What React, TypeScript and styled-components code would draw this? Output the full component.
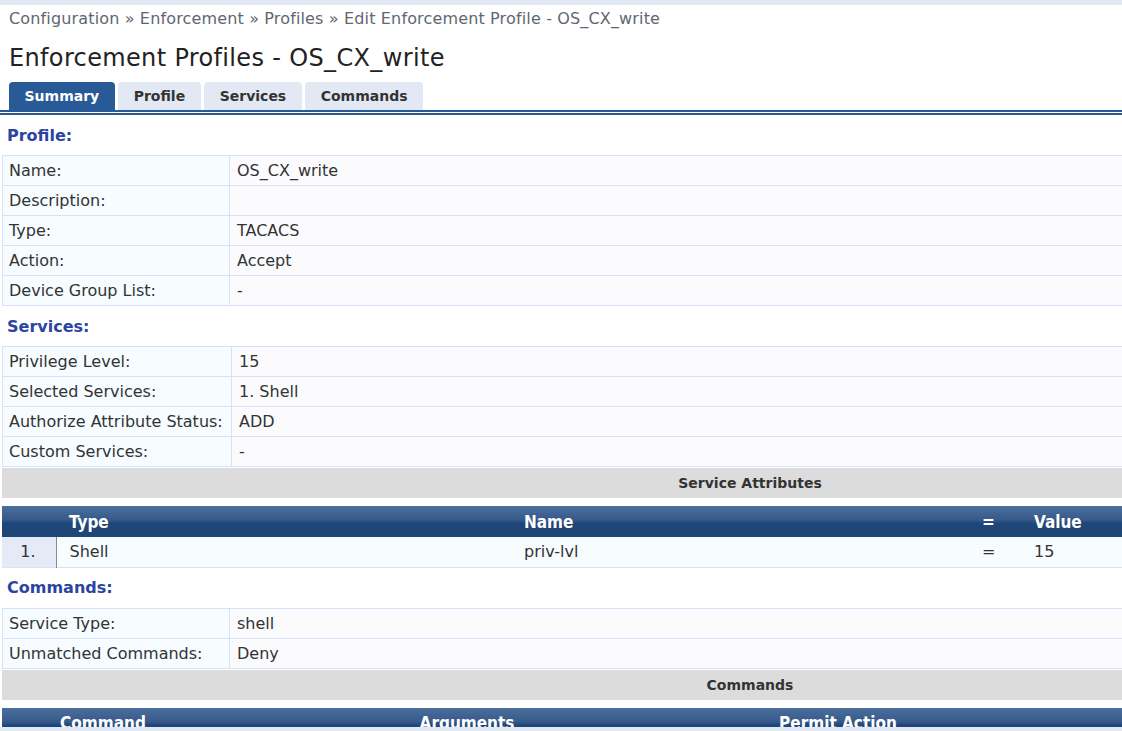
import React from 'react';
import styled, { createGlobalStyle } from 'styled-components';

const GlobalStyle = createGlobalStyle`
  html, body {
    margin: 0;
    padding: 0;
    background: #ffffff;
    overflow: hidden;
  }
  body {
    font-family: "DejaVu Sans", Verdana, sans-serif;
    color: #333333;
  }
`;

const Page = styled.div`
  width: 1498px;
`;

const TopStrip = styled.div`
  height: 5px;
  background: #e2e8f4;
`;

const BottomStrip = styled.div`
  position: fixed;
  left: 0;
  right: 0;
  bottom: 0;
  height: 4px;
  background: #e2e8f4;
`;

const Breadcrumb = styled.div`
  padding: 3px 9px 0;
  height: 22px;
  font-size: 16px;
  letter-spacing: 0.15px;
  line-height: 22px;
  color: #606770;
`;

const Title = styled.h1`
  margin: 0;
  padding: 13px 9px 0;
  font-size: 24px;
  letter-spacing: 0.35px;
  font-weight: normal;
  line-height: 30px;
  color: #222222;
`;

const TabBar = styled.div`
  display: flex;
  gap: 3.5px;
  margin-top: 9px;
  padding-left: 9px;
  border-bottom: 5px double #2a5a96;
`;

const Tab = styled.div<{ $active?: boolean }>`
  height: 28px;
  padding: 0 15.5px;
  display: flex;
  align-items: center;
  border-radius: 4px 4px 0 0;
  font-size: 14px;
  font-weight: bold;
  background: ${p => (p.$active ? '#285a98' : '#e2e8f4')};
  color: ${p => (p.$active ? '#ffffff' : '#333333')};
`;

const Content = styled.div`
  padding-left: 2px;
`;

const SectionTitle = styled.div`
  height: 40px;
  padding-left: 5px;
  display: flex;
  align-items: center;
  font-size: 16px;
  font-weight: bold;
  color: #2b44a0;
`;

const KVTable = styled.table`
  width: 100%;
  border-collapse: collapse;
  font-size: 16px;
`;

const LabelCell = styled.td<{ $width: number }>`
  width: ${p => p.$width}px;
  height: 29px;
  padding: 0 0 0 6px;
  box-sizing: border-box;
  border: 1px solid #d5e2f8;
  background: #f6fcff;
  color: #333333;
  white-space: nowrap;
`;

const ValueCell = styled.td`
  height: 29px;
  padding: 0 7px;
  border: 1px solid #d5e2f8;
  background: #fbfbfe;
  color: #333333;
`;

const GrayBar = styled.div<{ $top: number }>`
  margin-top: ${p => p.$top}px;
  height: 30px;
  display: flex;
  align-items: center;
  justify-content: center;
  background: #dcdcdc;
  font-size: 14px;
  font-weight: bold;
  color: #333333;
`;

const ListTable = styled.table`
  width: 100%;
  margin-top: 8px;
  border-collapse: collapse;
  table-layout: fixed;
`;

const HeadRow = styled.tr`
  height: 31px;
  background: linear-gradient(to bottom, #4b6f9c 0%, #36598a 45%, #1f4678 55%, #1e4677 100%);
`;

const HeadCell = styled.th<{ $align?: string }>`
  padding: 0 13px;
  text-align: ${p => p.$align || 'left'};
  font-family: "DejaVu Sans Condensed", "DejaVu Sans", sans-serif;
  font-size: 17px;
  font-weight: bold;
  color: #ffffff;
`;

const BodyRow = styled.tr`
  height: 30px;
  background: #f7fdff;
  border-bottom: 1px solid #d5e2f8;
`;

const NumCell = styled.td`
  padding: 0 20px 0 0;
  text-align: right;
  background: #e4eaf6;
  border-right: 1px solid #8a8a8a;
  font-size: 16px;
  color: #333333;
`;

const BodyCell = styled.td`
  padding: 0 13px;
  font-size: 16px;
  color: #333333;
`;

type Pair = [string, string];

const profileRows: Pair[] = [
  ['Name:', 'OS_CX_write'],
  ['Description:', ''],
  ['Type:', 'TACACS'],
  ['Action:', 'Accept'],
  ['Device Group List:', '-'],
];

const serviceRows: Pair[] = [
  ['Privilege Level:', '15'],
  ['Selected Services:', '1. Shell'],
  ['Authorize Attribute Status:', 'ADD'],
  ['Custom Services:', '-'],
];

const commandRows: Pair[] = [
  ['Service Type:', 'shell'],
  ['Unmatched Commands:', 'Deny'],
];

const Pairs = ({ rows, labelWidth }: { rows: Pair[]; labelWidth: number }) => (
  <KVTable>
    <tbody>
      {rows.map(([label, value]) => (
        <tr key={label}>
          <LabelCell $width={labelWidth}>{label}</LabelCell>
          <ValueCell>{value}</ValueCell>
        </tr>
      ))}
    </tbody>
  </KVTable>
);

const App: React.FC = () => {
  return (
    <Page>
      <GlobalStyle />
      <TopStrip />
      <Breadcrumb>Configuration » Enforcement » Profiles » Edit Enforcement Profile - OS_CX_write</Breadcrumb>
      <Title>Enforcement Profiles - OS_CX_write</Title>
      <TabBar>
        <Tab $active>Summary</Tab>
        <Tab>Profile</Tab>
        <Tab>Services</Tab>
        <Tab>Commands</Tab>
      </TabBar>
      <Content>
        <SectionTitle>Profile:</SectionTitle>
        <Pairs rows={profileRows} labelWidth={227} />

        <SectionTitle>Services:</SectionTitle>
        <Pairs rows={serviceRows} labelWidth={229} />
        <GrayBar $top={1}>Service Attributes</GrayBar>
        <ListTable>
          <colgroup>
            <col style={{ width: 54 }} />
            <col style={{ width: 455 }} />
            <col style={{ width: 458 }} />
            <col style={{ width: 52 }} />
            <col />
          </colgroup>
          <thead>
            <HeadRow>
              <HeadCell />
              <HeadCell>Type</HeadCell>
              <HeadCell>Name</HeadCell>
              <HeadCell>=</HeadCell>
              <HeadCell>Value</HeadCell>
            </HeadRow>
          </thead>
          <tbody>
            <BodyRow>
              <NumCell>1.</NumCell>
              <BodyCell>Shell</BodyCell>
              <BodyCell>priv-lvl</BodyCell>
              <BodyCell>=</BodyCell>
              <BodyCell>15</BodyCell>
            </BodyRow>
          </tbody>
        </ListTable>

        <SectionTitle>Commands:</SectionTitle>
        <Pairs rows={commandRows} labelWidth={227} />
        <GrayBar $top={1}>Commands</GrayBar>
        <ListTable>
          <colgroup>
            <col style={{ width: 202 }} />
            <col style={{ width: 526 }} />
            <col style={{ width: 216 }} />
            <col />
          </colgroup>
          <thead>
            <HeadRow>
              <HeadCell $align="center">Command</HeadCell>
              <HeadCell $align="center">Arguments</HeadCell>
              <HeadCell $align="center">Permit Action</HeadCell>
              <HeadCell />
            </HeadRow>
          </thead>
        </ListTable>
      </Content>
      <BottomStrip />
    </Page>
  );
};

export default App;
